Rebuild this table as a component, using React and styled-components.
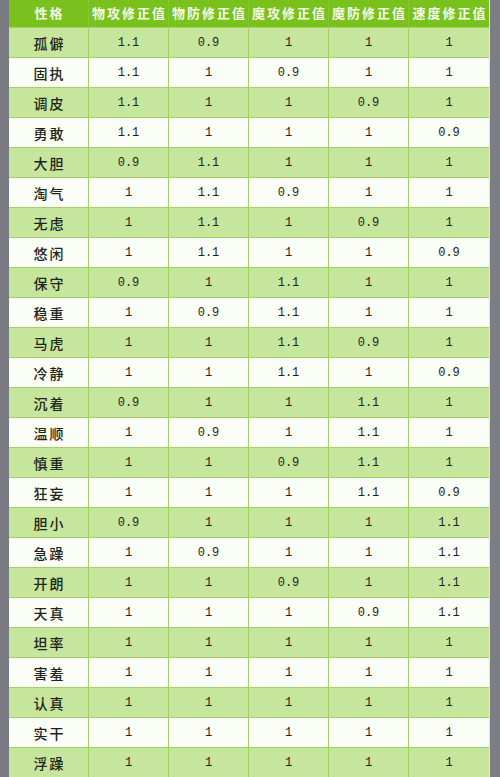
import React from "react";
import styled, { createGlobalStyle } from "styled-components";

const Global = createGlobalStyle`
  html, body { margin: 0; padding: 0; background: #7b7b83; }
  body { font-family: "Noto Sans CJK SC", "Noto Sans", sans-serif; }
`;

const Page = styled.div`
  display: grid;
  grid-template-columns: 9px 481px 10px;
  width: 500px;
  height: 777px;
  overflow: hidden;
  background: #7b7b83;
`;

const Gutter = styled.div`
  background: ${(p) => (p.$right ? "#7d7d85" : "#7a7a82")};
`;

const Table = styled.div`
  display: flex;
  flex-direction: column;
  background: #fff;
  border-right: 1px solid #dbeec3;
`;

const Row = styled.div`
  display: grid;
  grid-template-columns: repeat(6, 80px);
  height: ${(p) => (p.$head ? "28px" : "30px")};
  flex: none;
  background: ${(p) => (p.$head ? "#79c11c" : p.$alt ? "#fbfdf7" : "#c7e69d")};
`;

const Cell = styled.div`
  display: flex;
  align-items: center;
  justify-content: center;
  box-sizing: border-box;
  border-right: 1px solid ${(p) => (p.$head ? "#86c832" : "#a3d264")};
  border-bottom: 1px solid ${(p) => (p.$head ? "#9fd45d" : "#a3d264")};
  padding-bottom: ${(p) => (p.$head ? "3px" : "0")};
  &:last-child { border-right: none; }
`;

const HeadText = styled.span`
  font-family: "Noto Sans CJK SC", sans-serif;
  font-weight: 700;
  font-size: 13px;
  letter-spacing: 2px;
  margin-right: -2px;
  color: #f4fbe9;
  line-height: 1;
`;

const NameText = styled.span`
  font-family: "Noto Sans CJK SC", sans-serif;
  font-size: 14px;
  font-weight: 500;
  letter-spacing: 2px;
  margin-right: -2px;
  color: #1e2418;
  line-height: 1;
`;

const NumText = styled.span`
  font-family: "Liberation Mono", monospace;
  font-size: 12px;
  color: #1e2418;
  line-height: 1;
`;

const headers = ["性格", "物攻修正值", "物防修正值", "魔攻修正值", "魔防修正值", "速度修正值"];

const rows = [
  ["孤僻", "1.1", "0.9", "1", "1", "1"],
  ["固执", "1.1", "1", "0.9", "1", "1"],
  ["调皮", "1.1", "1", "1", "0.9", "1"],
  ["勇敢", "1.1", "1", "1", "1", "0.9"],
  ["大胆", "0.9", "1.1", "1", "1", "1"],
  ["淘气", "1", "1.1", "0.9", "1", "1"],
  ["无虑", "1", "1.1", "1", "0.9", "1"],
  ["悠闲", "1", "1.1", "1", "1", "0.9"],
  ["保守", "0.9", "1", "1.1", "1", "1"],
  ["稳重", "1", "0.9", "1.1", "1", "1"],
  ["马虎", "1", "1", "1.1", "0.9", "1"],
  ["冷静", "1", "1", "1.1", "1", "0.9"],
  ["沉着", "0.9", "1", "1", "1.1", "1"],
  ["温顺", "1", "0.9", "1", "1.1", "1"],
  ["慎重", "1", "1", "0.9", "1.1", "1"],
  ["狂妄", "1", "1", "1", "1.1", "0.9"],
  ["胆小", "0.9", "1", "1", "1", "1.1"],
  ["急躁", "1", "0.9", "1", "1", "1.1"],
  ["开朗", "1", "1", "0.9", "1", "1.1"],
  ["天真", "1", "1", "1", "0.9", "1.1"],
  ["坦率", "1", "1", "1", "1", "1"],
  ["害羞", "1", "1", "1", "1", "1"],
  ["认真", "1", "1", "1", "1", "1"],
  ["实干", "1", "1", "1", "1", "1"],
  ["浮躁", "1", "1", "1", "1", "1"],
];

export default function App() {
  return (
    <>
      <Global />
      <Page>
        <Gutter />
        <Table>
          <Row $head>
            {headers.map((h) => (
              <Cell $head key={h}>
                <HeadText>{h}</HeadText>
              </Cell>
            ))}
          </Row>
          {rows.map((r, i) => (
            <Row key={r[0]} $alt={i % 2 === 1}>
              {r.map((v, j) => (
                <Cell key={j}>
                  {j === 0 ? <NameText>{v}</NameText> : <NumText>{v}</NumText>}
                </Cell>
              ))}
            </Row>
          ))}
        </Table>
        <Gutter $right />
      </Page>
    </>
  );
}
